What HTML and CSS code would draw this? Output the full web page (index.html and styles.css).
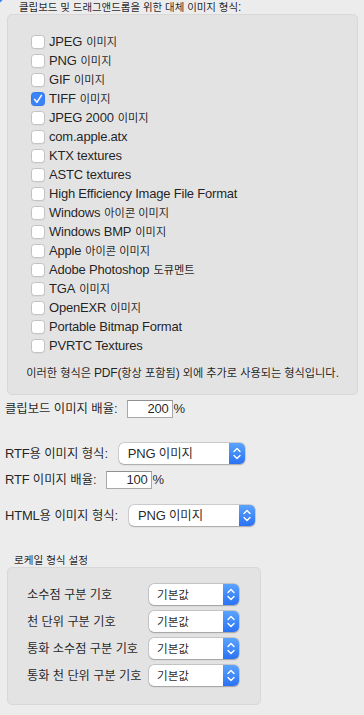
FILE: index.html
```html
<!DOCTYPE html>
<html lang="ko">
<head>
<meta charset="utf-8">
<title>이미지 형식</title>
<link rel="stylesheet" href="styles.css">
</head>
<body>
<div class="corner"></div>

<div class="group-title"><span class="k">클립보드 및 드래그앤드롭을 위한 대체 이미지 형식</span>:</div>
<div class="group formats">
  <ul class="checklist">
    <li><span class="cb"></span>JPEG <span class="k">이미지</span></li>
    <li><span class="cb"></span>PNG <span class="k">이미지</span></li>
    <li><span class="cb"></span>GIF <span class="k">이미지</span></li>
    <li><span class="cb on"><svg viewBox="0 0 14 14" width="14" height="14"><path d="M3.6 7.4 L5.9 10.3 L10.4 3.4" fill="none" stroke="#fff" stroke-width="1.5" stroke-linecap="round" stroke-linejoin="round"/></svg></span>TIFF <span class="k">이미지</span></li>
    <li><span class="cb"></span>JPEG 2000 <span class="k">이미지</span></li>
    <li><span class="cb"></span>com.apple.atx</li>
    <li><span class="cb"></span>KTX textures</li>
    <li><span class="cb"></span>ASTC textures</li>
    <li><span class="cb"></span>High Efficiency Image File Format</li>
    <li><span class="cb"></span>Windows <span class="k">아이콘 이미지</span></li>
    <li><span class="cb"></span>Windows BMP <span class="k">이미지</span></li>
    <li><span class="cb"></span>Apple <span class="k">아이콘 이미지</span></li>
    <li><span class="cb"></span>Adobe Photoshop <span class="k">도큐멘트</span></li>
    <li><span class="cb"></span>TGA <span class="k">이미지</span></li>
    <li><span class="cb"></span>OpenEXR <span class="k">이미지</span></li>
    <li><span class="cb"></span>Portable Bitmap Format</li>
    <li><span class="cb"></span>PVRTC Textures</li>
  </ul>
  <p class="note"><span class="k">이러한 형식은</span> PDF(<span class="k">항상 포함됨</span>) <span class="k">외에 추가로 사용되는 형식입니다</span>.</p>
</div>

<div class="fields">
  <div class="row r-clip">
    <span class="label"><span class="k">클립보드 이미지 배율</span>:</span>
    <span class="num">200</span><span class="unit">%</span>
  </div>
  <div class="row r-rtf">
    <span class="label">RTF<span class="k">용 이미지 형식</span>:</span>
    <span class="popup wide"><span class="popup-value">PNG <span class="k">이미지</span></span><span class="popup-arrows"><svg viewBox="0 0 16 21" width="16" height="21"><path d="M5 8.6 L8 5.6 L11 8.6 M5 12.4 L8 15.4 L11 12.4" fill="none" stroke="#fff" stroke-width="1.4" stroke-linecap="round" stroke-linejoin="round"/></svg></span></span>
  </div>
  <div class="row r-rtfscale">
    <span class="label">RTF <span class="k">이미지 배율</span>:</span>
    <span class="num">100</span><span class="unit">%</span>
  </div>
  <div class="row r-html">
    <span class="label">HTML<span class="k">용 이미지 형식</span>:</span>
    <span class="popup wide"><span class="popup-value">PNG <span class="k">이미지</span></span><span class="popup-arrows"><svg viewBox="0 0 16 21" width="16" height="21"><path d="M5 8.6 L8 5.6 L11 8.6 M5 12.4 L8 15.4 L11 12.4" fill="none" stroke="#fff" stroke-width="1.4" stroke-linecap="round" stroke-linejoin="round"/></svg></span></span>
  </div>
</div>

<div class="locale-title"><span class="k">로케일 형식 설정</span></div>
<div class="group locale">
  <span class="label k">소수점 구분 기호</span>
  <span class="popup small"><span class="popup-value k">기본값</span><span class="popup-arrows"><svg viewBox="0 0 16 21" width="16" height="21"><path d="M5 8.6 L8 5.6 L11 8.6 M5 12.4 L8 15.4 L11 12.4" fill="none" stroke="#fff" stroke-width="1.4" stroke-linecap="round" stroke-linejoin="round"/></svg></span></span>
  <span class="label k">천 단위 구분 기호</span>
  <span class="popup small"><span class="popup-value k">기본값</span><span class="popup-arrows"><svg viewBox="0 0 16 21" width="16" height="21"><path d="M5 8.6 L8 5.6 L11 8.6 M5 12.4 L8 15.4 L11 12.4" fill="none" stroke="#fff" stroke-width="1.4" stroke-linecap="round" stroke-linejoin="round"/></svg></span></span>
  <span class="label k">통화 소수점 구분 기호</span>
  <span class="popup small"><span class="popup-value k">기본값</span><span class="popup-arrows"><svg viewBox="0 0 16 21" width="16" height="21"><path d="M5 8.6 L8 5.6 L11 8.6 M5 12.4 L8 15.4 L11 12.4" fill="none" stroke="#fff" stroke-width="1.4" stroke-linecap="round" stroke-linejoin="round"/></svg></span></span>
  <span class="label k">통화 천 단위 구분 기호</span>
  <span class="popup small"><span class="popup-value k">기본값</span><span class="popup-arrows"><svg viewBox="0 0 16 21" width="16" height="21"><path d="M5 8.6 L8 5.6 L11 8.6 M5 12.4 L8 15.4 L11 12.4" fill="none" stroke="#fff" stroke-width="1.4" stroke-linecap="round" stroke-linejoin="round"/></svg></span></span>
</div>
</body>
</html>
```

FILE: styles.css
```css
html, body {
  margin: 0;
  padding: 0;
}
body {
  position: relative;
  height: 715px;
  overflow: hidden;
  background: #ececec;
  font-family: "Liberation Sans", "Noto Sans CJK KR", sans-serif;
  font-size: 13px;
  letter-spacing: -0.2px;
  color: rgba(0, 0, 0, 0.87);
}
.k {
  font-size: 0.86em;
  letter-spacing: 0;
}
.corner {
  position: absolute;
  left: -14px;
  top: -14px;
  width: 18px;
  height: 18px;
  border-radius: 50%;
  background: #3b82f7;
}
.group-title {
  height: 13px;
  padding-top: 1px;
  padding-left: 19px;
  font-size: 12px;
  line-height: 13px;
}
.group-title .k {
  font-size: 0.87em;
}
.group {
  box-sizing: border-box;
  background: #e3e3e3;
  border: 1px solid #d8d8d8;
  border-radius: 5px;
}
.formats {
  margin: 0 6px 0 7px;
  padding: 17px 0 13px;
}
.checklist {
  list-style: none;
  margin: 0;
  padding: 0 0 0 23px;
}
.checklist li {
  height: 19px;
  display: flex;
  align-items: center;
  gap: 4px;
  line-height: 16px;
}
.cb {
  flex: none;
  box-sizing: border-box;
  width: 14px;
  height: 14px;
  background: #fff;
  border: 1px solid #c2c2c2;
  border-radius: 3.5px;
  box-shadow: 0 0.5px 0.5px rgba(0, 0, 0, 0.06);
}
.cb.on {
  background: #3b84f7;
  border-color: #3479ee;
}
.cb.on svg {
  display: block;
  margin: -1px;
}
.note {
  margin: 10px 0 0;
  text-align: center;
  font-size: 12px;
  line-height: 16px;
}
.note .k {
  font-size: 0.93em;
}
.fields {
  padding-left: 5px;
}
.row {
  display: flex;
  align-items: center;
  line-height: 16px;
}
.row .label .k,
.popup-value .k {
  font-size: 0.95em;
}
.r-clip { margin-top: 5px; }
.r-rtf { margin-top: 25px; }
.r-rtfscale { margin-top: 7px; }
.r-html { margin-top: 16px; }
.row .label { margin-right: 9px; }
.r-rtf .label, .r-html .label { margin-right: 11px; }
.num {
  box-sizing: border-box;
  width: 46px;
  height: 18px;
  background: #fff;
  border: 1px solid #a8a8a8;
  border-top-color: #8f8f8f;
  padding-right: 3px;
  text-align: right;
  line-height: 16px;
}
.unit {
  margin-left: 1px;
}
.popup {
  display: flex;
  height: 21px;
  background: #fff;
  border-radius: 5px;
  overflow: hidden;
  box-shadow: 0 0 0 0.5px rgba(0, 0, 0, 0.2), 0 0.5px 1.5px rgba(0, 0, 0, 0.22);
}
.popup.wide { width: 126px; }
.popup.small { width: 90px; }
.popup-value {
  flex: 1;
  padding-left: 9px;
  line-height: 21px;
  white-space: nowrap;
}
.popup.small .popup-value {
  padding-left: 8px;
  font-size: 11.6px;
}
.popup-arrows {
  flex: none;
  width: 16px;
  background: linear-gradient(#5aa4ff, #2a72f3);
}
.popup-arrows svg { display: block; }
.locale-title {
  margin-top: 27px;
  padding-left: 14px;
  height: 14px;
  line-height: 14px;
  font-size: 11.5px;
}
.locale-title .k {
  font-size: 0.92em;
}
.locale {
  width: 254px;
  margin-left: 7px;
  padding: 16px 0 18px 19px;
  display: grid;
  grid-template-columns: 122px 90px;
  row-gap: 6px;
  align-items: center;
}
.locale .label {
  font-size: 12.2px;
  line-height: 16px;
  white-space: nowrap;
}
```
